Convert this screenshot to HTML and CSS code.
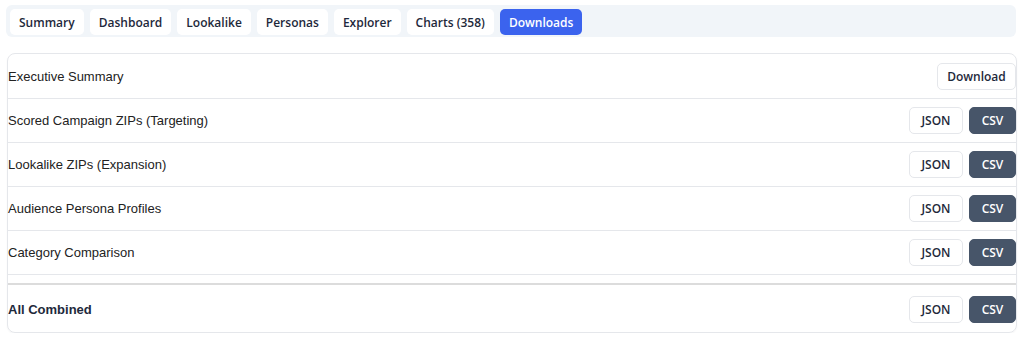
FILE: index.html
```html
<!DOCTYPE html>
<html>
<head>
<meta charset="utf-8">
<link rel="stylesheet" href="styles.css">
</head>
<body>
<div class="page">
  <nav class="tabs">
    <button class="tab">Summary</button>
    <button class="tab">Dashboard</button>
    <button class="tab">Lookalike</button>
    <button class="tab">Personas</button>
    <button class="tab">Explorer</button>
    <button class="tab">Charts (358)</button>
    <button class="tab active">Downloads</button>
  </nav>
  <section class="card">
    <div class="row">
      <span class="label">Executive Summary</span>
      <div class="actions"><button class="btn light wide">Download</button></div>
    </div>
    <div class="row">
      <span class="label">Scored Campaign ZIPs (Targeting)</span>
      <div class="actions"><button class="btn light">JSON</button><button class="btn dark">CSV</button></div>
    </div>
    <div class="row">
      <span class="label">Lookalike ZIPs (Expansion)</span>
      <div class="actions"><button class="btn light">JSON</button><button class="btn dark">CSV</button></div>
    </div>
    <div class="row">
      <span class="label">Audience Persona Profiles</span>
      <div class="actions"><button class="btn light">JSON</button><button class="btn dark">CSV</button></div>
    </div>
    <div class="row">
      <span class="label">Category Comparison</span>
      <div class="actions"><button class="btn light">JSON</button><button class="btn dark">CSV</button></div>
    </div>
    <div class="spacer"></div>
    <div class="row total">
      <span class="label strong">All Combined</span>
      <div class="actions"><button class="btn light">JSON</button><button class="btn dark">CSV</button></div>
    </div>
  </section>
</div>
</body>
</html>
```
FILE: styles.css
```css
* { box-sizing: border-box; }
body {
  margin: 0;
  background: #ffffff;
  font-family: "Liberation Sans", Arial, sans-serif;
}
.page {
  padding: 5px 7px 0 6px;
  display: flex;
  flex-direction: column;
  gap: 16px;
}
.tabs {
  display: flex;
  gap: 6px;
  background: #f1f5f9;
  border-radius: 6px;
  padding: 4px 4px;
  height: 32px;
  width: 1010px;
}
.tab {
  font-family: "Open Sans", "Noto Sans", sans-serif;
  font-weight: 600;
  font-size: 12px;
  color: #1e293b;
  background: #ffffff;
  border: none;
  border-radius: 5px;
  padding: 0 9px;
  height: 26px;
  cursor: pointer;
}
.tab.active {
  background: #3b63ee;
  color: #ffffff;
}
.card {
  border: 1px solid #e5e7eb;
  border-radius: 8px;
  margin-left: 1px;
  width: 1010px;
  box-shadow: 0 1px 2px rgba(0,0,0,0.04);
}
.row {
  display: flex;
  align-items: center;
  justify-content: space-between;
  height: 44px;
  border-bottom: 1px solid #e5e7eb;
}
.row:first-child {
  height: 45px;
}
.label {
  font-size: 13px;
  color: #222222;
}
.label.strong {
  font-weight: bold;
  color: #1e293b;
}
.actions {
  display: flex;
  gap: 6px;
}
.btn {
  font-family: "Open Sans", "Noto Sans", sans-serif;
  font-weight: 600;
  font-size: 12px;
  height: 27px;
  border-radius: 5px;
  cursor: pointer;
}
.btn.light {
  background: #ffffff;
  color: #1e293b;
  border: 1px solid #e5e7eb;
  padding: 0 11px;
  width: 54px;
}
.btn.light.wide {
  width: 79px;
  padding: 0 8px;
}
.btn.dark {
  background: #475569;
  color: #ffffff;
  border: 1px solid #475569;
  padding: 0 10px;
  width: 47px;
}
.spacer {
  height: 10px;
  border-bottom: 2px solid #dcdcdc;
}
.row.total {
  height: 47px;
  border-bottom: none;
  padding-top: 1px;
}
```
